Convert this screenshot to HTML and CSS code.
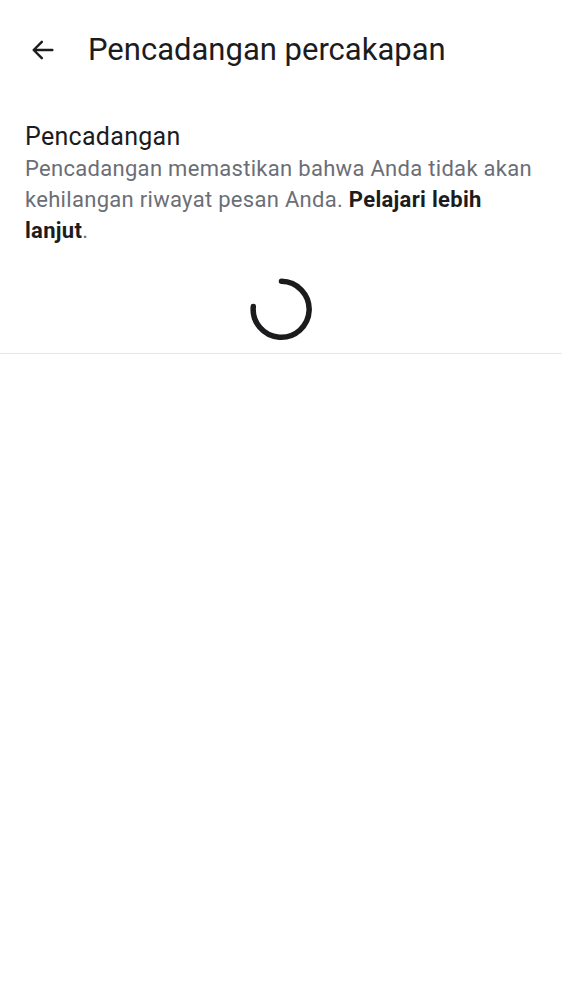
FILE: index.html
```html
<!DOCTYPE html>
<html lang="id">
<head>
<meta charset="utf-8">
<link rel="stylesheet" href="styles.css">
</head>
<body>
<header class="topbar">
  <button class="back" aria-label="Kembali">
    <svg width="28" height="28" viewBox="0 0 24 24"><path d="M20 12H4.5M11 5l-7 7 7 7" fill="none" stroke="#1c1c1e" stroke-width="2.1" stroke-linecap="round" stroke-linejoin="round"/></svg>
  </button>
  <h1 class="title">Pencadangan percakapan</h1>
</header>
<section class="section">
  <h2 class="heading">Pencadangan</h2>
  <p class="desc">Pencadangan memastikan bahwa Anda tidak akan kehilangan riwayat pesan Anda. <b class="link">Pelajari lebih lanjut</b>.</p>
</section>
<div class="loader">
  <svg width="66" height="66" viewBox="0 0 66 66"><path d="M33.5 5.3 A28 28 0 1 1 5.3 30.5" fill="none" stroke="#1c1c1e" stroke-width="5.5" stroke-linecap="round"/></svg>
</div>
<hr class="divider">
</body>
</html>
```
FILE: styles.css
```css
* { box-sizing: border-box; }
body {
  margin: 0;
  background: #fff;
  font-family: Roboto, "Noto Sans", sans-serif;
  color: #1c1c1e;
  width: 562px;
}
.topbar {
  display: flex;
  align-items: center;
  height: 100px;
  padding-left: 29px;
}
.back {
  border: 0;
  background: none;
  padding: 0;
  width: 28px;
  height: 28px;
  display: flex;
  margin-right: 31px;
}
.title {
  margin: 0;
  font-size: 31px;
  font-weight: 400;
  position: relative;
  top: -1px;
}
.section {
  padding: 21px 25px 0;
}
.heading {
  margin: 0;
  font-size: 25px;
  font-weight: 400;
  line-height: 32px;
  letter-spacing: 0.3px;
}
.desc {
  margin: 0;
  font-size: 22px;
  line-height: 31px;
  color: #6b6e76;
  letter-spacing: 0.3px;
}
.link {
  color: #1c1c1e;
  font-weight: 700;
}
.loader {
  display: flex;
  justify-content: center;
  padding-top: 30px;
  height: 107px;
}
.divider {
  margin: 0;
  border: 0;
  border-top: 1px solid #e6e6ea;
}
```
